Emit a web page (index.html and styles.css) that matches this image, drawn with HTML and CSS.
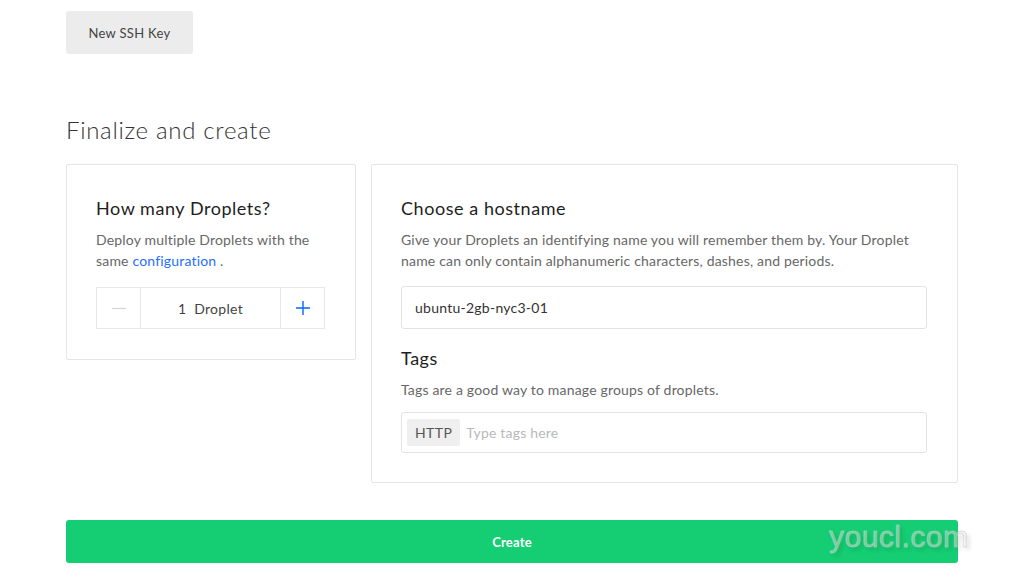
FILE: index.html
```html
<!DOCTYPE html>
<html>
<head>
<meta charset="utf-8">
<link rel="stylesheet" href="styles.css">
</head>
<body>
<div class="page">
  <div class="top"><button class="btn-gray">New SSH Key</button></div>
  <h1 class="section-title">Finalize and create</h1>
  <div class="cards">
    <div class="card card-left">
      <h2 class="card-title">How many Droplets?</h2>
      <p class="desc">Deploy multiple Droplets with the same <a class="link">configuration</a>&nbsp;.</p>
      <div class="stepper">
        <div class="step step-minus"><svg width="14" height="14" viewBox="0 0 14 14"><path d="M0 7.5H14" stroke="#d4d4d4" stroke-width="1.2"/></svg></div>
        <div class="step-value">1&nbsp; Droplet</div>
        <div class="step step-plus"><svg width="14" height="14" viewBox="0 0 14 14"><path d="M0 7H14M7 0V14" stroke="#0069ff" stroke-width="1.4"/></svg></div>
      </div>
    </div>
    <div class="card card-right">
      <h2 class="card-title">Choose a hostname</h2>
      <p class="desc">Give your Droplets an identifying name you will remember them by. Your Droplet name can only contain alphanumeric characters, dashes, and periods.</p>
      <div class="input input-host">ubuntu-2gb-nyc3-01</div>
      <h2 class="card-title tags-title">Tags</h2>
      <p class="desc desc-tags">Tags are a good way to manage groups of droplets.</p>
      <div class="input input-tags"><span class="chip">HTTP</span><span class="placeholder">Type tags here</span></div>
    </div>
  </div>
  <button class="btn-create">Create</button>
</div>
<div class="watermark">youcl.com</div>
</body>
</html>
```
FILE: styles.css
```css
* { box-sizing: border-box; }
html, body { margin: 0; padding: 0; background: #fff; }
body { font-family: "Lato", "Open Sans", sans-serif; color: #222; width: 1024px; height: 576px; overflow: hidden; position: relative; }
.page { padding: 11px 66px 0 66px; width: 1024px; }
.top { display: flex; }
.btn-gray {
  width: 127px; height: 43px; border: none; border-radius: 3px;
  background: #ececec; color: #444; font-family: inherit; font-size: 13px;
  padding: 0; cursor: pointer; letter-spacing: 0.3px;
}
.section-title {
  margin: 62px 0 0 0; font-size: 24px; font-weight: 300; color: #333; line-height: 28px; letter-spacing: 0.7px;
}
.cards { display: flex; gap: 15px; margin-top: 20px; align-items: flex-start; }
.card { border: 1px solid #e5e5e5; border-radius: 2px; padding: 31px 30px 30px 29px; }
.card-left { width: 290px; }
.card-right { width: 588px; padding-right: 30px; padding-bottom: 29px; }
.card-title { margin: 0; font-size: 18px; font-weight: 400; line-height: 24px; color: #1e1e1e; letter-spacing: 0.55px; }
.desc { margin: 9px 0 0 0; font-size: 14px; line-height: 21px; color: #676767; letter-spacing: 0.18px; }
.link { color: #1f6fff; }
.stepper { display: flex; margin-top: 16px; height: 42px; border: 1px solid #e8e8e8; width: 229px; }
.step { width: 44px; display: flex; align-items: center; justify-content: center; }
.step-minus { border-right: 1px solid #e8e8e8; }
.step-plus { border-left: 1px solid #e8e8e8; }
.step-value { flex: 1; display: flex; align-items: center; justify-content: center; font-size: 14px; color: #444; letter-spacing: 0.3px; }
.input { border: 1px solid #e3e3e3; border-radius: 3px; display: flex; align-items: center; font-size: 14px; }
.input-host { margin-top: 15px; height: 43px; padding-left: 13px; color: #333; letter-spacing: 0.25px; }
.tags-title { margin-top: 17px; }
.desc-tags { margin-top: 9px; }
.input-tags { margin-top: 12px; height: 41px; padding-left: 5px; }
.chip { background: #efefef; color: #555; height: 27px; padding: 0 8px; display: flex; align-items: center; border-radius: 2px; letter-spacing: 0.4px; }
.placeholder { color: #b9b9b9; margin-left: 6px; letter-spacing: 0.2px; }
.btn-create {
  display: block; margin-top: 37px; width: 892px; height: 43px; border: none; border-radius: 3px;
  background: #15cd72; color: #fff; font-family: inherit; font-weight: 700; font-size: 13px; padding: 0; letter-spacing: 0.2px;
}
.watermark {
  position: absolute; left: 829px; top: 520px; font-family: "Liberation Sans", sans-serif; font-size: 30px;
  color: rgba(255,255,255,0.35); -webkit-text-stroke: 1px rgba(200,200,200,0.6);
  text-shadow: 3px 3px 4px rgba(0,0,0,0.15); letter-spacing: 0.5px;
}
```
